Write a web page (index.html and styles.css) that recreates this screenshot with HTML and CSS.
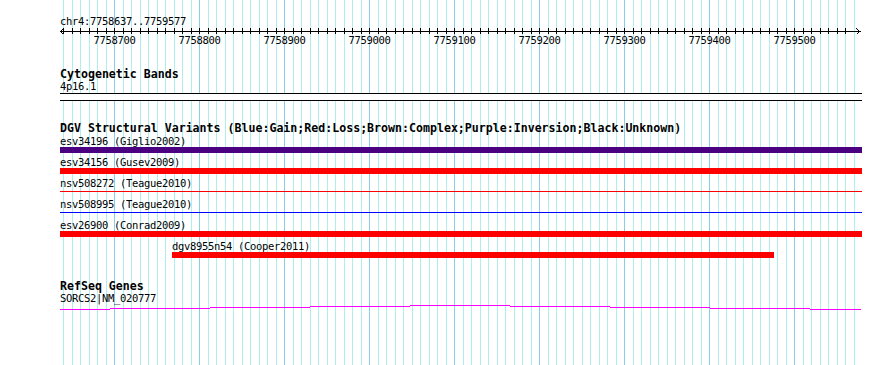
FILE: index.html
```html
<!DOCTYPE html>
<html lang="en">
<head>
    <meta charset="UTF-8" />
    <title>chr4:7758637..7759577</title>
    <link rel="stylesheet" href="styles.css">
</head>
<body>
<div class="panel">
    <div class="ruler-name">chr4:7758637..7759577</div>

    <!-- scale bar: one tick every 10 bp (8.5px) -->
    <svg class="ruler" width="802" height="6" shape-rendering="crispEdges">
        <defs>
            <pattern id="ticks" width="85" height="6" patternUnits="userSpaceOnUse" x="54">
                <rect x="0" width="1" height="6"/>
                <rect x="9" width="1" height="6"/>
                <rect x="17" width="1" height="6"/>
                <rect x="26" width="1" height="6"/>
                <rect x="34" width="1" height="6"/>
                <rect x="43" width="1" height="6"/>
                <rect x="51" width="1" height="6"/>
                <rect x="60" width="1" height="6"/>
                <rect x="68" width="1" height="6"/>
                <rect x="77" width="1" height="6"/>
            </pattern>
        </defs>
        <rect x="3" y="0" width="791" height="6" fill="url(#ticks)"/>
        <rect x="0" y="3" width="801" height="1" fill="#000"/>
        <polyline points="3.5,0.5 0.5,3.5 3.5,6.5" fill="none" stroke="#000"/>
        <polyline points="796.5,0.5 799.5,3.5 796.5,6.5" fill="none" stroke="#000"/>
    </svg>

    <div class="ruler-labels">
        <span>7758700</span>
        <span>7758800</span>
        <span>7758900</span>
        <span>7759000</span>
        <span>7759100</span>
        <span>7759200</span>
        <span>7759300</span>
        <span>7759400</span>
        <span>7759500</span>
    </div>

    <div class="track-title cyto-title">Cytogenetic Bands</div>
    <div class="label">4p16.1</div>
    <div class="band"></div>

    <div class="track-title dgv-title">DGV Structural Variants (Blue:Gain;Red:Loss;Brown:Complex;Purple:Inversion;Black:Unknown)</div>
    <div class="feature">
        <div class="label">esv34196 (Giglio2002)</div>
        <div class="bar inversion"></div>
    </div>
    <div class="feature">
        <div class="label">esv34156 (Gusev2009)</div>
        <div class="bar loss"></div>
    </div>
    <div class="feature">
        <div class="label">nsv508272 (Teague2010)</div>
        <div class="bar thin loss"></div>
    </div>
    <div class="feature">
        <div class="label">nsv508995 (Teague2010)</div>
        <div class="bar thin gain"></div>
    </div>
    <div class="feature">
        <div class="label">esv26900 (Conrad2009)</div>
        <div class="bar loss"></div>
    </div>
    <div class="feature" style="margin-left: 112px; width: 602px;">
        <div class="label">dgv8955n54 (Cooper2011)</div>
        <div class="bar loss"></div>
    </div>

    <div class="track-title refseq-title">RefSeq Genes</div>
    <div class="label">SORCS2|NM_020777</div>
    <svg class="gene" width="802" height="6" shape-rendering="crispEdges">
        <g fill="#ff00ff">
            <rect x="0" y="5" width="50" height="1"/>
            <rect x="50" y="4" width="100" height="1"/>
            <rect x="150" y="3" width="100" height="1"/>
            <rect x="250" y="2" width="100" height="1"/>
            <rect x="350" y="1" width="100" height="1"/>
            <rect x="450" y="2" width="100" height="1"/>
            <rect x="550" y="3" width="100" height="1"/>
            <rect x="650" y="4" width="100" height="1"/>
            <rect x="750" y="5" width="51" height="1"/>
        </g>
    </svg>
</div>
</body>
</html>
```

FILE: styles.css
```css
* {
    margin: 0;
    padding: 0;
    box-sizing: border-box;
}

body {
    background-color: #fff;
    color: #000;
    font-family: "DejaVu Sans Mono", "Liberation Mono", monospace;
    font-size: 10.5px;
    letter-spacing: -0.32px;
    width: 890px;
    height: 365px;
    overflow: hidden;
}

/* grid: minor line every 10 bp, major every 100 bp */
.panel {
    margin-left: 60px;
    width: 802px;
    height: 365px;
    overflow: hidden;
    background-image: linear-gradient(to right,
        #87ceeb 0 1px, transparent 1px 9px,
        #afeeee 9px 10px, transparent 10px 17px,
        #afeeee 17px 18px, transparent 18px 26px,
        #afeeee 26px 27px, transparent 27px 34px,
        #afeeee 34px 35px, transparent 35px 43px,
        #afeeee 43px 44px, transparent 44px 51px,
        #afeeee 51px 52px, transparent 52px 60px,
        #afeeee 60px 61px, transparent 61px 68px,
        #afeeee 68px 69px, transparent 69px 77px,
        #afeeee 77px 78px, transparent 78px 85px);
    background-size: 85px 100%;
    background-position: 54px 0;
    background-repeat: repeat-x;
}

.ruler-name {
    margin-top: 15px;
    line-height: 13px;
    white-space: nowrap;
}

.ruler,
.gene {
    display: block;
}

.ruler-labels {
    display: flex;
    padding-left: 12px;
    line-height: 13px;
}

.ruler-labels span {
    width: 85px;
    flex: none;
    text-align: center;
}

.track-title {
    font-weight: bold;
    font-size: 11.6px;
    letter-spacing: 0;
    line-height: 12px;
    white-space: nowrap;
}

.cyto-title {
    margin-top: 21px;
}

.label {
    line-height: 13px;
    white-space: nowrap;
}

.band {
    height: 8px;
    background-color: #fff;
    border-top: 1px solid #000;
    border-bottom: 1px solid #000;
}

.dgv-title {
    margin-top: 21px;
    margin-bottom: 1px;
}

.feature {
    height: 21px;
}

.feature .label {
    line-height: 12px;
}

.bar {
    height: 6px;
}

.bar.thin {
    height: 1px;
    margin-top: 2px;
}

.loss {
    background-color: #ff0000;
}

.gain {
    background-color: #0000ff;
}

.inversion {
    background-color: #4b0082;
}

.refseq-title {
    margin-top: 19px;
}

.refseq-title + .label {
    line-height: 12px;
}
```
